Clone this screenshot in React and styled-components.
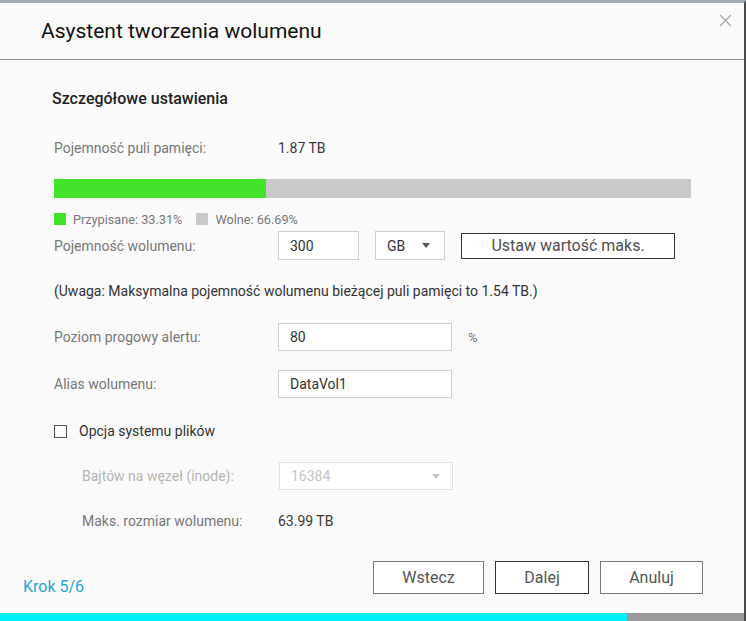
import React from "react";
import styled, { createGlobalStyle } from "styled-components";

const Global = createGlobalStyle`
  html, body { margin: 0; padding: 0; }
  body {
    font-family: Roboto, "Noto Sans", "Liberation Sans", sans-serif;
    background: #fafafa;
  }
  * { box-sizing: border-box; }
`;

const Dialog = styled.div`
  position: relative;
  width: 746px;
  height: 621px;
  display: flex;
  flex-direction: column;
  background: #fafafa;
  border-right: 2px solid #4a4a4a;
  border-top: 3px solid #a3abb4;
  overflow: hidden;
`;

const Header = styled.div`
  position: relative;
  height: 57px;
  flex: none;
  display: flex;
  align-items: center;
  padding-left: 41px;
  border-bottom: 1px solid #8e8e8e;
`;

const Title = styled.h1`
  margin: 0;
  font-size: 21px;
  font-weight: 400;
  color: #111;
`;

const Close = styled.button`
  position: absolute;
  top: 9px;
  right: 11px;
  width: 16px;
  height: 16px;
  padding: 0;
  border: 0;
  background: none;
  cursor: pointer;
  display: flex;
  align-items: center;
  justify-content: center;
`;

const Body = styled.div`
  display: flex;
  flex-direction: column;
  padding-left: 54px;
`;

const SectionTitle = styled.h2`
  margin: 29px 0 0 -2px;
  font-size: 16px;
  line-height: 20px;
  font-weight: 500;
  color: #222;
`;

const Row = styled.div`
  display: flex;
  align-items: center;
  margin-top: ${(p) => p.$mt}px;
  height: ${(p) => p.$h || 20}px;
  padding-left: ${(p) => p.$indent || 0}px;
`;

const Label = styled.div`
  width: ${(p) => p.$w || 224}px;
  flex: none;
  font-size: 14px;
  color: ${(p) => (p.$muted ? "#b4b4b4" : "#777")};
`;

const Value = styled.div`
  font-size: 14px;
  color: #383838;
`;

const Bar = styled.div`
  margin-top: 21px;
  width: 637px;
  height: 19px;
  background: #c9c9c9;
  display: flex;
`;

const BarFill = styled.div`
  height: 100%;
  background: #45e22b;
`;

const Legend = styled.div`
  margin-top: 13px;
  height: 16px;
  display: flex;
  align-items: center;
  font-size: 12.7px;
  color: #777;
`;

const Swatch = styled.span`
  width: 12px;
  height: 12px;
  background: ${(p) => p.$color};
  margin-right: 7px;
  margin-left: ${(p) => p.$ml || 0}px;
`;

const Input = styled.div`
  width: ${(p) => p.$w}px;
  height: 100%;
  background: #fff;
  border: 1px solid ${(p) => (p.$disabled ? "#e3e3e3" : "#cfcfcf")};
  display: flex;
  align-items: center;
  justify-content: space-between;
  padding-left: 11px;
  padding-right: ${(p) => p.$pr || 0}px;
  margin-left: ${(p) => p.$ml || 0}px;
  font-size: 14px;
  color: ${(p) => (p.$disabled ? "#c4c4c4" : "#333")};
`;

const Caret = styled.span`
  width: 0;
  height: 0;
  border-left: 4.5px solid transparent;
  border-right: 4.5px solid transparent;
  border-top: 5px solid ${(p) => p.$color || "#555"};
`;

const MaxButton = styled.button`
  margin-left: 16px;
  width: 214px;
  height: 26px;
  background: #fff;
  border: 1px solid #333;
  font-family: inherit;
  font-size: 16px;
  color: #505050;
  padding: 0;
`;

const Note = styled.div`
  margin-top: 21px;
  height: 20px;
  line-height: 20px;
  font-size: 14px;
  color: #333;
`;

const Unit = styled.span`
  margin-left: 16px;
  font-size: 13px;
  color: #777;
`;

const Check = styled.span`
  width: 13px;
  height: 13px;
  border: 1px solid #555;
  background: #fff;
  margin-right: 12px;
`;

const CheckLabel = styled.span`
  font-size: 14px;
  color: #333;
`;

const Footer = styled.div`
  margin-top: 30px;
  height: 33px;
  display: flex;
  align-items: stretch;
  padding: 0 41px 0 23px;
`;

const Step = styled.div`
  align-self: flex-end;
  font-size: 16px;
  color: #27a5d6;
  margin-bottom: -2px;
  flex: 1;
`;

const FooterButton = styled.button`
  width: ${(p) => p.$w}px;
  margin-left: 11px;
  background: #fff;
  border: 1px solid ${(p) => (p.$primary ? "#333" : "#7a7a7a")};
  font-family: inherit;
  font-size: 16px;
  color: #555;
  padding: 0;
`;

const Progress = styled.div`
  margin-top: auto;
  height: 8px;
  display: flex;
  background: #9a9a9a;
`;

const ProgressFill = styled.div`
  background: #00f0f8;
`;

export default function App() {
  const used = 33.31;
  return (
    <>
      <Global />
      <Dialog>
        <Header>
          <Title>Asystent tworzenia wolumenu</Title>
          <Close aria-label="close">
            <svg width="13" height="13" viewBox="0 0 13 13">
              <path d="M1 1 L12 12 M12 1 L1 12" stroke="#a8a8a8" strokeWidth="1.3" fill="none" />
            </svg>
          </Close>
        </Header>
        <Body>
          <SectionTitle>Szczegółowe ustawienia</SectionTitle>
          <Row $mt={29}>
            <Label>Pojemność puli pamięci:</Label>
            <Value>1.87 TB</Value>
          </Row>
          <Bar>
            <BarFill style={{ width: `${used}%` }} />
          </Bar>
          <Legend>
            <Swatch $color="#45e22b" />
            Przypisane: 33.31%
            <Swatch $color="#c9c9c9" $ml={14} />
            Wolne: 66.69%
          </Legend>
          <Row $mt={4} $h={29}>
            <Label>Pojemność wolumenu:</Label>
            <Input $w={81}>300</Input>
            <Input $w={70} $ml={16} $pr={14}>
              GB
              <Caret />
            </Input>
            <MaxButton>Ustaw wartość maks.</MaxButton>
          </Row>
          <Note>(Uwaga: Maksymalna pojemność wolumenu bieżącej puli pamięci to 1.54 TB.)</Note>
          <Row $mt={22} $h={28}>
            <Label>Poziom progowy alertu:</Label>
            <Input $w={174}>80</Input>
            <Unit>%</Unit>
          </Row>
          <Row $mt={19} $h={28}>
            <Label>Alias wolumenu:</Label>
            <Input $w={174}>DataVol1</Input>
          </Row>
          <Row $mt={23}>
            <Check />
            <CheckLabel>Opcja systemu plików</CheckLabel>
          </Row>
          <Row $mt={21} $h={28} $indent={28}>
            <Label $w={197} $muted>Bajtów na węzeł (inode):</Label>
            <Input $w={174} $disabled $pr={12}>
              16384
              <Caret $color="#c4c4c4" />
            </Input>
          </Row>
          <Row $mt={21} $indent={28}>
            <Label $w={196}>Maks. rozmiar wolumenu:</Label>
            <Value>63.99 TB</Value>
          </Row>
        </Body>
        <Footer>
          <Step>Krok 5/6</Step>
          <FooterButton $w={111}>Wstecz</FooterButton>
          <FooterButton $w={94} $primary>Dalej</FooterButton>
          <FooterButton $w={103}>Anuluj</FooterButton>
        </Footer>
        <Progress>
          <ProgressFill style={{ width: "627px" }} />
        </Progress>
      </Dialog>
    </>
  );
}
